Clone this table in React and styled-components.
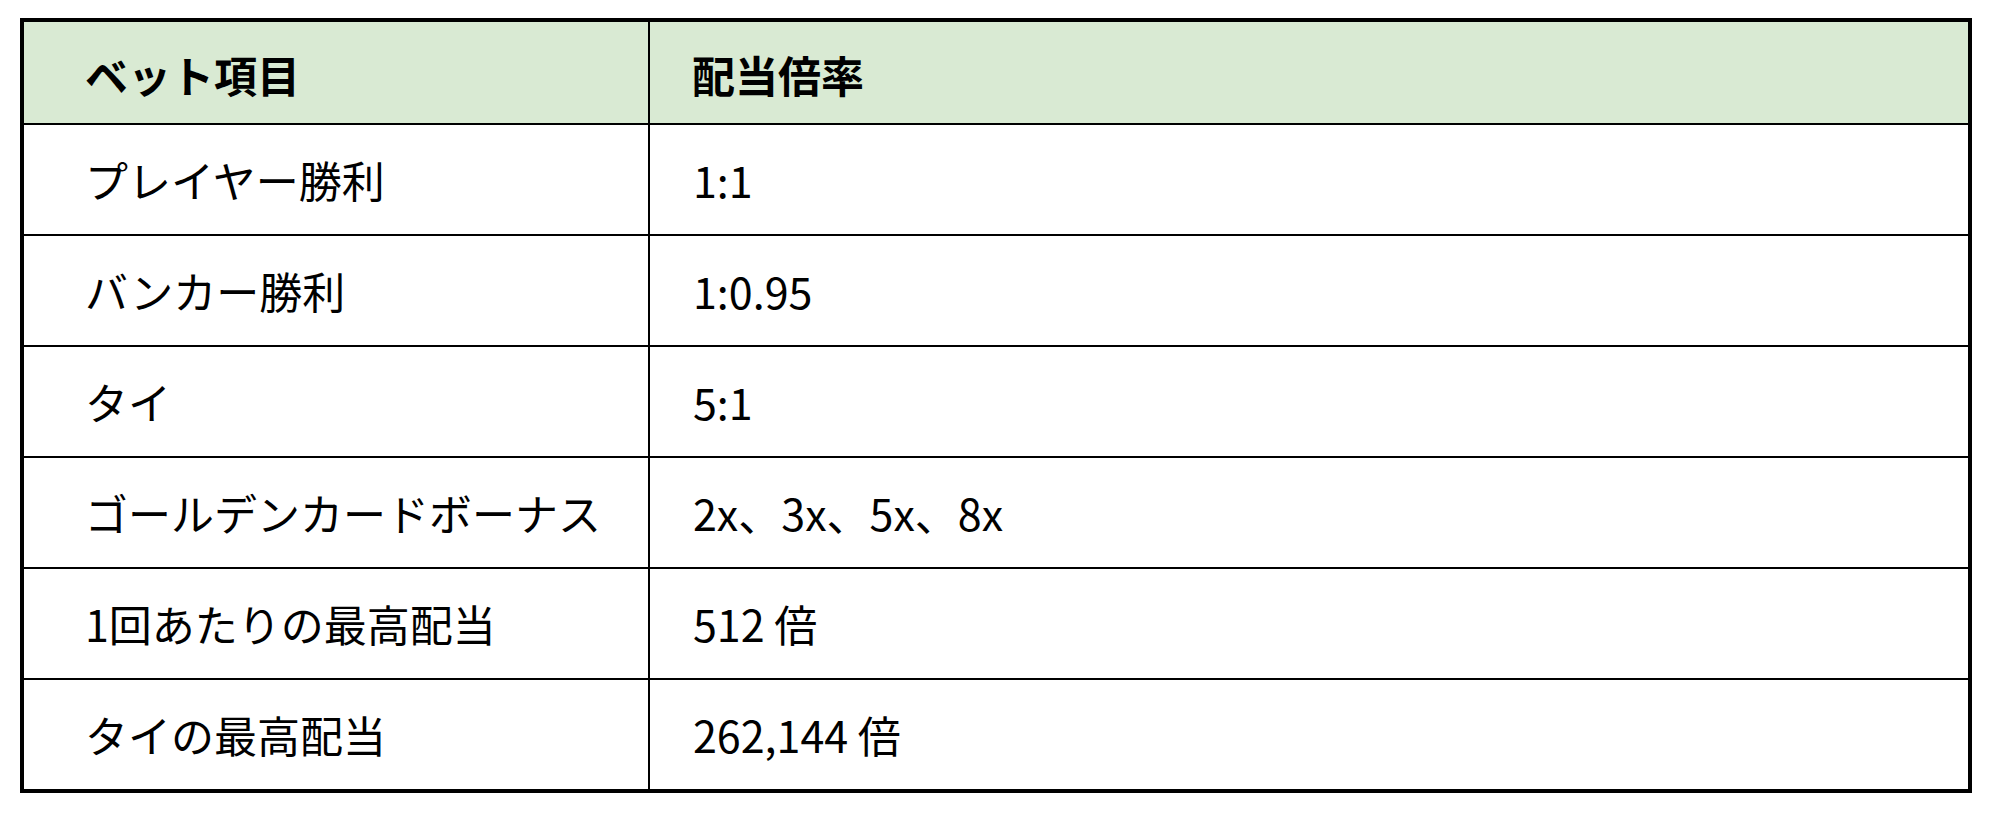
import styled, { createGlobalStyle } from 'styled-components';

const GlobalStyle = createGlobalStyle`
  html, body {
    margin: 0;
    padding: 0;
    background: #ffffff;
  }
  body {
    font-family: "Noto Sans CJK JP", "Noto Sans", sans-serif;
    color: #000000;
  }
`;

const Page = styled.div`
  padding: 18px 20px;
`;

const Table = styled.table`
  width: 1952px;
  border: 4px solid #000;
  border-collapse: separate;
  border-spacing: 0;
  table-layout: fixed;
`;

const HeadCell = styled.th`
  height: 103px;
  padding: 4px 0 0 ${({ $first }) => ($first ? '61px' : '42px')};
  background: #d9ead3;
  border-bottom: 2px solid #000;
  border-right: ${({ $first }) => ($first ? '2px solid #000' : 'none')};
  text-align: left;
  vertical-align: middle;
  font-size: 43px;
  font-weight: 700;
  line-height: 1.2;
  box-sizing: border-box;
`;

const Cell = styled.td`
  height: 109px;
  padding: 0 0 0 ${({ $first }) => ($first ? '61px' : '43px')};
  border-bottom: ${({ $last }) => ($last ? 'none' : '2px solid #000')};
  border-right: ${({ $first }) => ($first ? '2px solid #000' : 'none')};
  vertical-align: middle;
  font-size: 43px;
  font-weight: 400;
  line-height: 1.2;
`;

const rows = [
  ['プレイヤー勝利', '1:1'],
  ['バンカー勝利', '1:0.95'],
  ['タイ', '5:1'],
  ['ゴールデンカードボーナス', '2x、3x、5x、8x'],
  ['1回あたりの最高配当', '512 倍'],
  ['タイの最高配当', '262,144 倍'],
];

export default function App() {
  return (
    <>
      <GlobalStyle />
      <Page>
        <Table>
          <colgroup>
            <col style={{ width: '626px' }} />
            <col />
          </colgroup>
          <thead>
            <tr>
              <HeadCell $first>ベット項目</HeadCell>
              <HeadCell>配当倍率</HeadCell>
            </tr>
          </thead>
          <tbody>
            {rows.map(([item, odds], i) => (
              <tr key={item}>
                <Cell $first $last={i === rows.length - 1}>{item}</Cell>
                <Cell $last={i === rows.length - 1}>{odds}</Cell>
              </tr>
            ))}
          </tbody>
        </Table>
      </Page>
    </>
  );
}
